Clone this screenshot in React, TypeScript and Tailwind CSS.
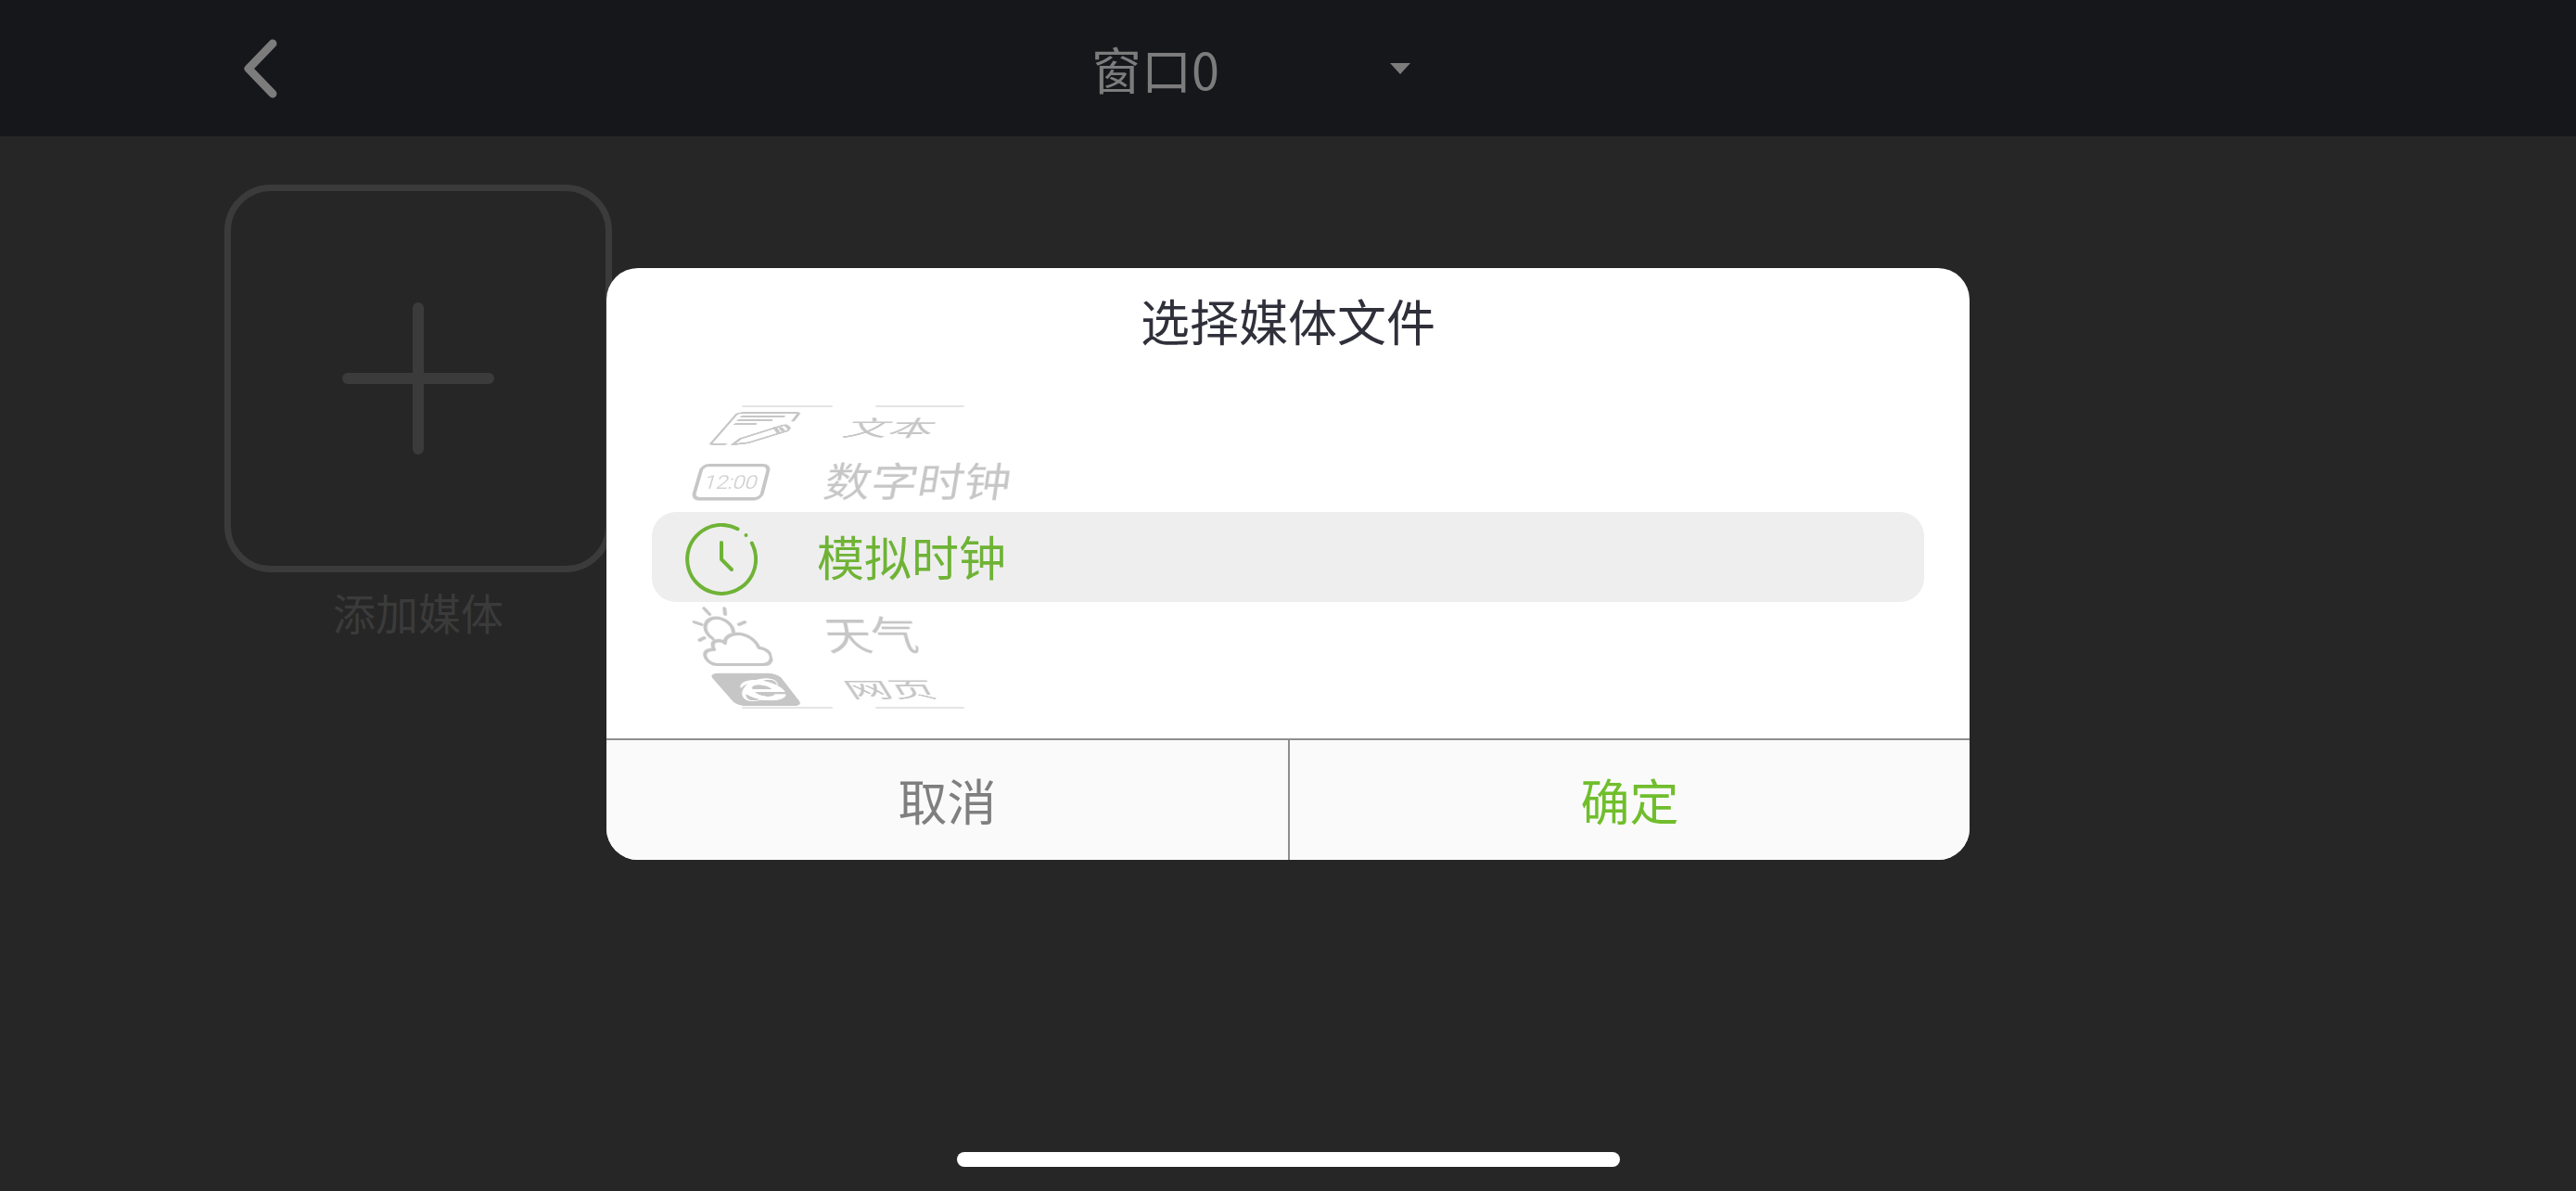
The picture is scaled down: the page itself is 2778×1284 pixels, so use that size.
import { useState } from "react";
import type { ReactNode } from "react";
import { FaInternetExplorer } from "react-icons/fa";

const ROW_ANGLE = 27;
const WHEEL_RADIUS = 186;

interface MediaType {
  id: string;
  label: string;
  icon: ReactNode;
}

function TextIcon() {
  return (
    <svg viewBox="0 0 78 78" className="size-[78px]" fill="none" stroke="currentColor" strokeWidth="4" strokeLinecap="round" strokeLinejoin="round">
      <path d="M18 75H4a3 3 0 0 1-3-3V8a6 6 0 0 1 6-6h64a3 3 0 0 1 3 3v16" />
      <path d="M10 11h49M10 20h38M10 29h23" />
      <path d="M27 76l3-13 35-30c2-2 4-2 6 0l5 6c2 2 2 4 0 6L43 72z" />
      <path d="M59 37l8 11M66 38l5 6" />
    </svg>
  );
}

function DigitalClockIcon() {
  return (
    <svg viewBox="0 0 78 78" className="size-[78px]" fill="none">
      <rect x="2" y="17" width="74" height="43" rx="7" stroke="currentColor" strokeWidth="4" />
      <text
        x="39"
        y="47"
        textAnchor="middle"
        fill="currentColor"
        className="font-['Roboto',sans-serif] text-[24px] font-light"
      >
        12:00
      </text>
    </svg>
  );
}

function AnalogClockIcon() {
  return (
    <svg viewBox="0 0 78 78" className="size-[78px]" fill="none" stroke="currentColor" strokeWidth="4" strokeLinecap="round" strokeLinejoin="round">
      <path d="M56.5 6.2A37 37 0 1 0 71.8 21.5" />
      <path d="M39 21v18l11 11" />
      <circle cx="65.5" cy="13" r="2" fill="currentColor" stroke="none" />
    </svg>
  );
}

function WeatherIcon() {
  return (
    <svg viewBox="0 0 78 78" className="size-[78px]" fill="none" stroke="currentColor" strokeWidth="4" strokeLinecap="round" strokeLinejoin="round">
      <path d="M18 42A15 15 0 1 1 42.5 34.5" />
      <path d="M16 56c-1-6 1-10 5-11 4-1 7 0 9 3 1-7 8-12 17-12 10 0 18 8 19 18 6 0 11 5 11 11s-5 11-11 11H15C9 76 4 71 4 65s5-9 12-9z" />
      <path d="M18 4l4 7M40 4l-1 7M3 21l7 3M58 21l-7 3M3 44l6-3" />
    </svg>
  );
}

function WebIcon() {
  return (
    <span className="flex size-[78px] items-center justify-center rounded-xl bg-[#c6c6c6] pl-2 text-white">
      <FaInternetExplorer className="size-[54px]" />
    </span>
  );
}

const MEDIA_TYPES: MediaType[] = [
  { id: "text", label: "文本", icon: <TextIcon /> },
  { id: "digital", label: "数字时钟", icon: <DigitalClockIcon /> },
  { id: "analog", label: "模拟时钟", icon: <AnalogClockIcon /> },
  { id: "weather", label: "天气", icon: <WeatherIcon /> },
  { id: "web", label: "网页", icon: <WebIcon /> },
];

/* Sliver of the row that is just rolling out of sight */
function WheelEdge() {
  return (
    <div className="flex gap-[46px] pl-[97px]">
      <span className="h-[2px] w-[98px] rounded-full bg-[#e4e4e4]" />
      <span className="h-[2px] w-[96px] rounded-full bg-[#e4e4e4]" />
    </div>
  );
}

function MediaWheel() {
  const [selected, setSelected] = useState(2);

  return (
    <div className="flex h-[327px] flex-col justify-between">
      <WheelEdge />
      <div
        role="listbox"
        aria-label="选择媒体文件"
        className="grid h-[97px] items-center rounded-[26px] bg-[#eeeeee] pt-1 perspective-[1150px]"
      >
        {MEDIA_TYPES.map((item, i) => {
          const angle = (selected - i) * ROW_ANGLE;
          return (
            <button
              key={item.id}
              type="button"
              role="option"
              aria-selected={i === selected}
              onClick={() => setSelected(i)}
              className={`col-start-1 row-start-1 flex h-[78px] items-center gap-16 pl-9 text-[51px] leading-[70px] ${
                i === selected ? "text-[#6fb336]" : "text-[#c6c6c6]"
              }`}
              style={{
                transform: `translateZ(-${WHEEL_RADIUS}px) rotateX(${angle}deg) translateZ(${WHEEL_RADIUS}px)`,
              }}
            >
              <span className="flex w-[78px] justify-center">{item.icon}</span>
              <span className="pb-2">{item.label}</span>
            </button>
          );
        })}
      </div>
      <WheelEdge />
    </div>
  );
}

export default function App() {
  return (
    <div className="flex min-h-screen flex-col bg-[#262626] font-['Noto_Sans_CJK_SC',sans-serif]">
      {/* Top bar */}
      <header className="grid h-[147px] grid-cols-[1fr_424px_1fr] items-center bg-[#16171b] text-[#7c7c7c]">
        <button type="button" aria-label="返回" className="justify-self-start pl-[262px]">
          <svg viewBox="0 0 38 66" className="h-[66px] w-[38px]" fill="none" stroke="currentColor" strokeWidth="9" strokeLinecap="round" strokeLinejoin="round">
            <path d="M32 6L6 33l26 27" />
          </svg>
        </button>
        <div className="grid items-center">
          <select
            aria-label="窗口"
            className="col-start-1 row-start-1 h-20 appearance-none bg-transparent text-[54px] leading-[80px]"
          >
            <option>窗口0</option>
          </select>
          <svg viewBox="0 0 22 12" className="pointer-events-none col-start-1 row-start-1 mr-20 h-3 w-[22px] justify-self-end" fill="currentColor">
            <path d="M0 0h22L11 12z" />
          </svg>
        </div>
      </header>

      {/* Media list */}
      <main className="flex flex-1 flex-wrap items-start px-[242px] pt-[52px]">
        <button type="button" className="flex flex-col items-center gap-2.5 text-[#3b3b3b]">
          <span className="flex size-[418px] items-center justify-center rounded-[50px] border-[7px] border-current">
            <svg viewBox="0 0 164 164" className="size-[164px]" fill="none" stroke="currentColor" strokeWidth="12" strokeLinecap="round">
              <path d="M82 6v152M6 82h152" />
            </svg>
          </span>
          <span className="text-[46px] leading-[64px]">添加媒体</span>
        </button>
      </main>

      {/* Home indicator */}
      <footer className="flex justify-center pb-[26px]">
        <div className="h-4 w-[715px] rounded-full bg-white" />
      </footer>

      <div className="fixed inset-0 flex items-center justify-center pb-[68px]">
        <section
          role="dialog"
          aria-labelledby="picker-title"
          className="w-full max-w-[1470px] overflow-hidden rounded-[34px] bg-white"
        >
          <h2 id="picker-title" className="pt-5 text-center text-[53px] leading-[72px] text-[#2f303a]">
            选择媒体文件
          </h2>
          <div className="px-[49px] pt-14 pb-8">
            <MediaWheel />
          </div>
          <div className="grid h-[131px] grid-cols-2 border-t-2 border-[#8e8e8e] bg-[#fafafa] text-[53px]">
            <button type="button" className="text-[#7f7f7f]">
              取消
            </button>
            <button type="button" className="border-l-2 border-[#8e8e8e] text-[#70be2c]">
              确定
            </button>
          </div>
        </section>
      </div>
    </div>
  );
}
